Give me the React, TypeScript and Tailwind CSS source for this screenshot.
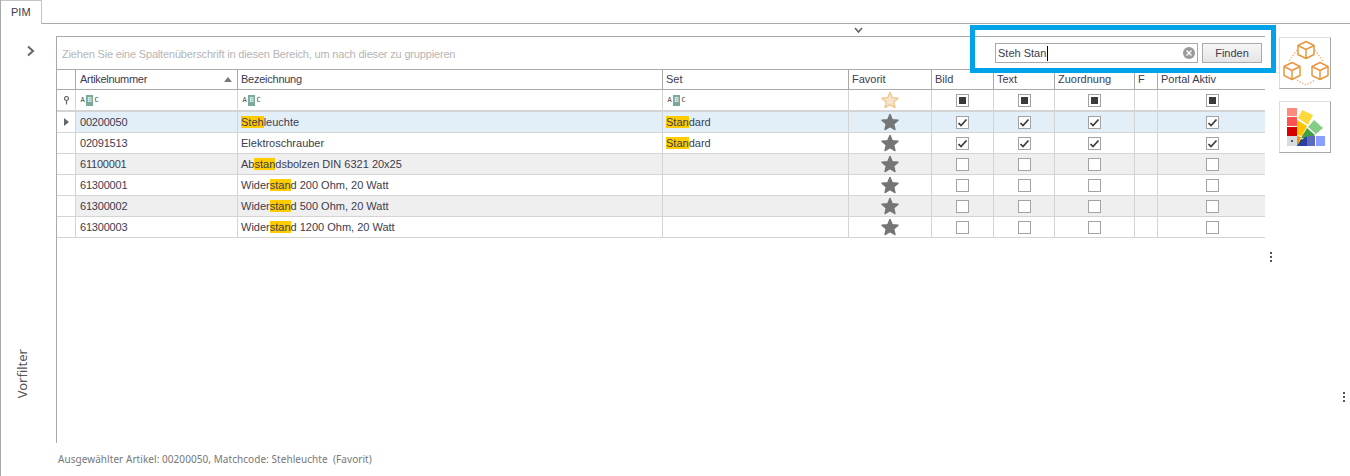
import React from "react";

const COLS = "grid grid-cols-[19px_162px_425px_186px_83px_62px_61px_80px_23px_107px]";
const FONT = "font-['Liberation_Sans',sans-serif]";

type Row = {
  nr: string;
  name: [string, string, string];
  set?: [string, string];
  checked: boolean;
  bg: string;
  current?: boolean;
};

const rows: Row[] = [
  { nr: "00200050", name: ["", "Steh", "leuchte"], set: ["Stan", "dard"], checked: true, bg: "bg-[#e2eff9]", current: true },
  { nr: "02091513", name: ["Elektroschrauber", "", ""], set: ["Stan", "dard"], checked: true, bg: "bg-white" },
  { nr: "61100001", name: ["Ab", "stan", "dsbolzen DIN 6321 20x25"], checked: false, bg: "bg-[#efefef]" },
  { nr: "61300001", name: ["Wider", "stan", "d 200 Ohm, 20 Watt"], checked: false, bg: "bg-white" },
  { nr: "61300002", name: ["Wider", "stan", "d 500 Ohm, 20 Watt"], checked: false, bg: "bg-[#efefef]" },
  { nr: "61300003", name: ["Wider", "stan", "d 1200 Ohm, 20 Watt"], checked: false, bg: "bg-white" },
];

const Star = ({ outline }: { outline?: boolean }) => (
  <svg width="18" height="18" viewBox="0 0 20 20">
    <polygon
      points="10,1.5 12.6,7.4 19,8 14.2,12.2 15.6,18.5 10,15.2 4.4,18.5 5.8,12.2 1,8 7.4,7.4"
      fill={outline ? "#f9e3c8" : "#757575"}
      stroke={outline ? "#eec388" : "#757575"}
      strokeWidth="1.4"
      strokeLinejoin="round"
    />
  </svg>
);

const Check = ({ state }: { state: "on" | "off" | "mixed" }) => (
  <div className="w-[13px] h-[13px] border border-[#a3a3a3] bg-white flex items-center justify-center">
    {state === "mixed" && <div className="w-[7px] h-[7px] bg-[#3a3a3a]" />}
    {state === "on" && (
      <svg width="11" height="11" viewBox="0 0 11 11">
        <path d="M1.5 6 L4 8.5 L9.5 2.5" fill="none" stroke="#3a3a3a" strokeWidth="1.7" />
      </svg>
    )}
  </div>
);

const Abc = () => (
  <div className="flex items-center gap-px h-[11px] font-['DejaVu_Sans_Mono',monospace] text-[7px] leading-none text-[#444]">
    <span className="w-[5px] text-center">A</span>
    <span className="w-[7px] h-[11px] bg-[#7aaa9a] text-white flex items-center justify-center">B</span>
    <span className="w-[5px] text-center">C</span>
  </div>
);

const Cube = ({ x, y }: { x: number; y: number }) => (
  <g transform={`translate(${x} ${y})`} fill="none" stroke="#e8963f" strokeWidth="1.5" strokeLinejoin="round">
    <path d="M0 -8.5 L8 -4.5 L8 4.5 L0 8.5 L-8 4.5 L-8 -4.5 Z" />
    <path d="M-8 -4.5 L0 -0.5 L8 -4.5 M0 -0.5 L0 8.5" />
  </g>
);

const BoxesIcon = () => (
  <svg width="50" height="50" viewBox="0 0 50 50">
    <path d="M17 12 L9 23 M35 12 L43 23 M17 42 L26 47 L35 42" fill="none" stroke="#eea868" strokeWidth="1.1" strokeDasharray="1.5 1.5" />
    <Cube x={26} y={12} />
    <Cube x={12} y={33} />
    <Cube x={40} y={33} />
  </svg>
);

const PaletteIcon = () => (
  <svg width="38" height="38" viewBox="0 0 38 38">
    <rect x="0" y="0" width="10" height="8" fill="#ff8a80" />
    <rect x="0" y="9" width="10" height="9" fill="#ff5252" />
    <rect x="0" y="19" width="10" height="9" fill="#d50000" />
    <rect x="0" y="28" width="10" height="10" fill="#d5dde0" />
    <rect x="4" y="32" width="2" height="2" fill="#555" />
    <polygon points="15,2 26,7 21,17 11,10" fill="#ffd83d" />
    <polygon points="10,12 20,18 15,28 10,27" fill="#ffc400" />
    <polygon points="10,28 14,29 11,37 10,37" fill="#ff8f00" />
    <polygon points="27,12 36,20 29,26 21,19" fill="#85cc85" />
    <polygon points="20,20 28,27 22,32 14,30" fill="#43a047" />
    <polygon points="14,31 22,33 15,38 10,38" fill="#1b5e20" />
    <polygon points="10,38 18,29 20,29 20,38" fill="#2f3f9f" />
    <rect x="20" y="28" width="8" height="10" fill="#5c6bc0" />
    <rect x="29" y="28" width="9" height="10" fill="#8c9eff" />
  </svg>
);

const Dots = () => (
  <div className="flex flex-col gap-[2px]">
    <div className="w-[2px] h-[2px] bg-[#555]" />
    <div className="w-[2px] h-[2px] bg-[#555]" />
    <div className="w-[2px] h-[2px] bg-[#555]" />
  </div>
);

const Mark = ({ children }: { children: string }) =>
  children ? <span className="bg-[#ffcc00]">{children}</span> : null;

const headCell = "h-5 border-r border-b border-[#a9a9a9] pl-[3px] flex items-center";
const cell = "h-[21px] border-r border-b border-[#d4d4d4] flex items-center";
const filterCell = "h-5 border-r border-[#d4d4d4] flex items-center";

const Grid = () => (
  <div className="text-[11px] text-[#3c3c50] leading-none">
    <div className={COLS}>
      <div className={headCell} />
      <div className={`${headCell} justify-between pl-[4px] pr-[4px]`}>
        <span className="tracking-[-0.3px]">Artikelnummer</span>
        <div className="w-0 h-0 border-l-[4px] border-r-[4px] border-b-[5px] border-l-transparent border-r-transparent border-b-[#777] mr-[1px]" />
      </div>
      <div className={`${headCell} tracking-[-0.25px]`}>Bezeichnung</div>
      <div className={headCell}>Set</div>
      <div className={headCell}>Favorit</div>
      <div className={headCell}>Bild</div>
      <div className={headCell}>Text</div>
      <div className={headCell}>Zuordnung</div>
      <div className={headCell}>F</div>
      <div className={`${headCell} border-r-0`}>Portal Aktiv</div>
    </div>

    <div className={`${COLS} border-b-2 border-[#d4d4d4]`}>
      <div className={`${filterCell} justify-center`}>
        <svg width="7" height="9" viewBox="0 0 7 9">
          <circle cx="3.5" cy="2.5" r="2" fill="none" stroke="#666" strokeWidth="1.2" />
          <path d="M3.5 4.5 V8.5" stroke="#666" strokeWidth="1.2" />
        </svg>
      </div>
      <div className={`${filterCell} pl-[4px]`}><Abc /></div>
      <div className={`${filterCell} pl-[4px]`}><Abc /></div>
      <div className={`${filterCell} pl-[4px]`}><Abc /></div>
      <div className={`${filterCell} justify-center`}><Star outline /></div>
      <div className={`${filterCell} justify-center`}><Check state="mixed" /></div>
      <div className={`${filterCell} justify-center`}><Check state="mixed" /></div>
      <div className={`${filterCell} justify-center`}><Check state="mixed" /></div>
      <div className={filterCell} />
      <div className="h-5 flex items-center justify-center pl-[2px]"><Check state="mixed" /></div>
    </div>

    {rows.map((row) => (
      <div key={row.nr} className={COLS}>
        <div className={`${cell} justify-center bg-white`}>
          {row.current && (
            <div className="w-0 h-0 border-t-[4px] border-b-[4px] border-l-[5px] border-t-transparent border-b-transparent border-l-[#666]" />
          )}
        </div>
        <div className={`${cell} ${row.bg} pl-[4px] tracking-[-0.2px]`}>{row.nr}</div>
        <div className={`${cell} ${row.bg} pl-[3px]`}>
          <span className="whitespace-pre">
            {row.name[0]}
            <Mark>{row.name[1]}</Mark>
            {row.name[2]}
          </span>
        </div>
        <div className={`${cell} ${row.bg} pl-[3px]`}>
          {row.set && (
            <span>
              <Mark>{row.set[0]}</Mark>
              {row.set[1]}
            </span>
          )}
        </div>
        <div className={`${cell} ${row.bg} justify-center`}><Star /></div>
        <div className={`${cell} ${row.bg} justify-center`}><Check state={row.checked ? "on" : "off"} /></div>
        <div className={`${cell} ${row.bg} justify-center`}><Check state={row.checked ? "on" : "off"} /></div>
        <div className={`${cell} ${row.bg} justify-center`}><Check state={row.checked ? "on" : "off"} /></div>
        <div className={`${cell} ${row.bg}`} />
        <div className={`${cell} ${row.bg} justify-center border-r-0 pl-[2px]`}><Check state={row.checked ? "on" : "off"} /></div>
      </div>
    ))}
  </div>
);

const App = () => {
  return (
    <div className={`relative w-[1350px] h-[476px] overflow-hidden bg-white border-l border-[#a9a9a9] ${FONT}`}>
      {/* tab strip */}
      <div className="flex h-6">
        <div className="w-[41px] h-6 border-t border-r border-[#c4c4c4] flex items-center pl-[10px] text-[11px] text-[#3c3c50]">PIM</div>
        <div className="flex-1 border-b border-[#a9a9a9]" />
      </div>

      <div className="flex h-[452px]">
        {/* Vorfilter */}
        <div className="w-[55px] h-full flex flex-col justify-between items-start">
          <svg className="ml-[25px] mt-[21px]" width="10" height="12" viewBox="0 0 10 12">
            <path d="M2 1.5 L7 6 L2 10.5" fill="none" stroke="#666" strokeWidth="2" />
          </svg>
          <div className="[writing-mode:vertical-rl] rotate-180 font-['Noto_Sans',sans-serif] text-[13px] leading-none text-[#555] ml-[15px] mb-[78px]">Vorfilter</div>
        </div>

        {/* grid */}
        <div className="w-[1209px] flex flex-col">
          <div className="h-3 flex justify-center items-center pl-[395px]">
            <svg width="9" height="7" viewBox="0 0 9 7">
              <path d="M1 1 L4.5 5 L8 1" fill="none" stroke="#666" strokeWidth="1.6" />
            </svg>
          </div>
          <div className="h-[407px] border-l border-t border-[#a9a9a9]">
            <div className="h-[33px] border-b border-[#a9a9a9] flex items-center justify-between pl-[5px] pr-[3px] text-[11px] leading-none text-[#b5b5b5]">
              <span className="mt-[2px] tracking-[-0.17px]">Ziehen Sie eine Spaltenüberschrift in diesen Bereich, um nach dieser zu gruppieren</span>
              <div className="flex gap-[4px] text-[#3c3c50]">
                <div className="w-[203px] h-5 border border-[#a9a9a9] flex items-center justify-between pl-[2px] pr-[2px]">
                  <span className="border-r border-black h-[15px] flex items-center pr-px">Steh Stan</span>
                  <div className="w-3 h-3 rounded-full bg-[#9a9a9a] flex items-center justify-center">
                    <svg width="6" height="6" viewBox="0 0 6 6">
                      <path d="M0.5 0.5 L5.5 5.5 M5.5 0.5 L0.5 5.5" stroke="white" strokeWidth="1.3" />
                    </svg>
                  </div>
                </div>
                <button className="w-[60px] h-5 border border-[#a9a9a9] bg-gradient-to-b from-[#f6f6f6] to-[#e6e6e6] text-[11px]">Finden</button>
              </div>
            </div>
            <Grid />
          </div>
          <div className="pl-[2px] pt-[10px] font-['Noto_Sans',sans-serif] text-[10px] leading-[12px] tracking-[0.06px] text-[#777]">
            Ausgewählter Artikel: 00200050, Matchcode: Stehleuchte&nbsp; (Favorit)
          </div>
        </div>

        {/* side buttons */}
        <div className="w-[14px] pt-[228px] pl-[5px] flex flex-col items-start">
          <Dots />
        </div>
        <div className="w-[52px] flex flex-col gap-3 pt-[13px]">
          <div className="w-[52px] h-[52px] border border-[#dcdcdc] border-r-[#a9a9a9] border-b-[#a9a9a9] flex items-center justify-center"><BoxesIcon /></div>
          <div className="w-[52px] h-[52px] border border-[#dcdcdc] border-r-[#a9a9a9] border-b-[#a9a9a9] flex items-center justify-center pl-[2px]"><PaletteIcon /></div>
        </div>
        <div className="flex-1 pt-[368px] pl-[12px]">
          <Dots />
        </div>
      </div>

      {/* highlight frame */}
      <div className="absolute left-[969px] top-[25px] w-[306px] h-[48px] border-[5px] border-[#00a2e8]" />
    </div>
  );
};

export default App;
